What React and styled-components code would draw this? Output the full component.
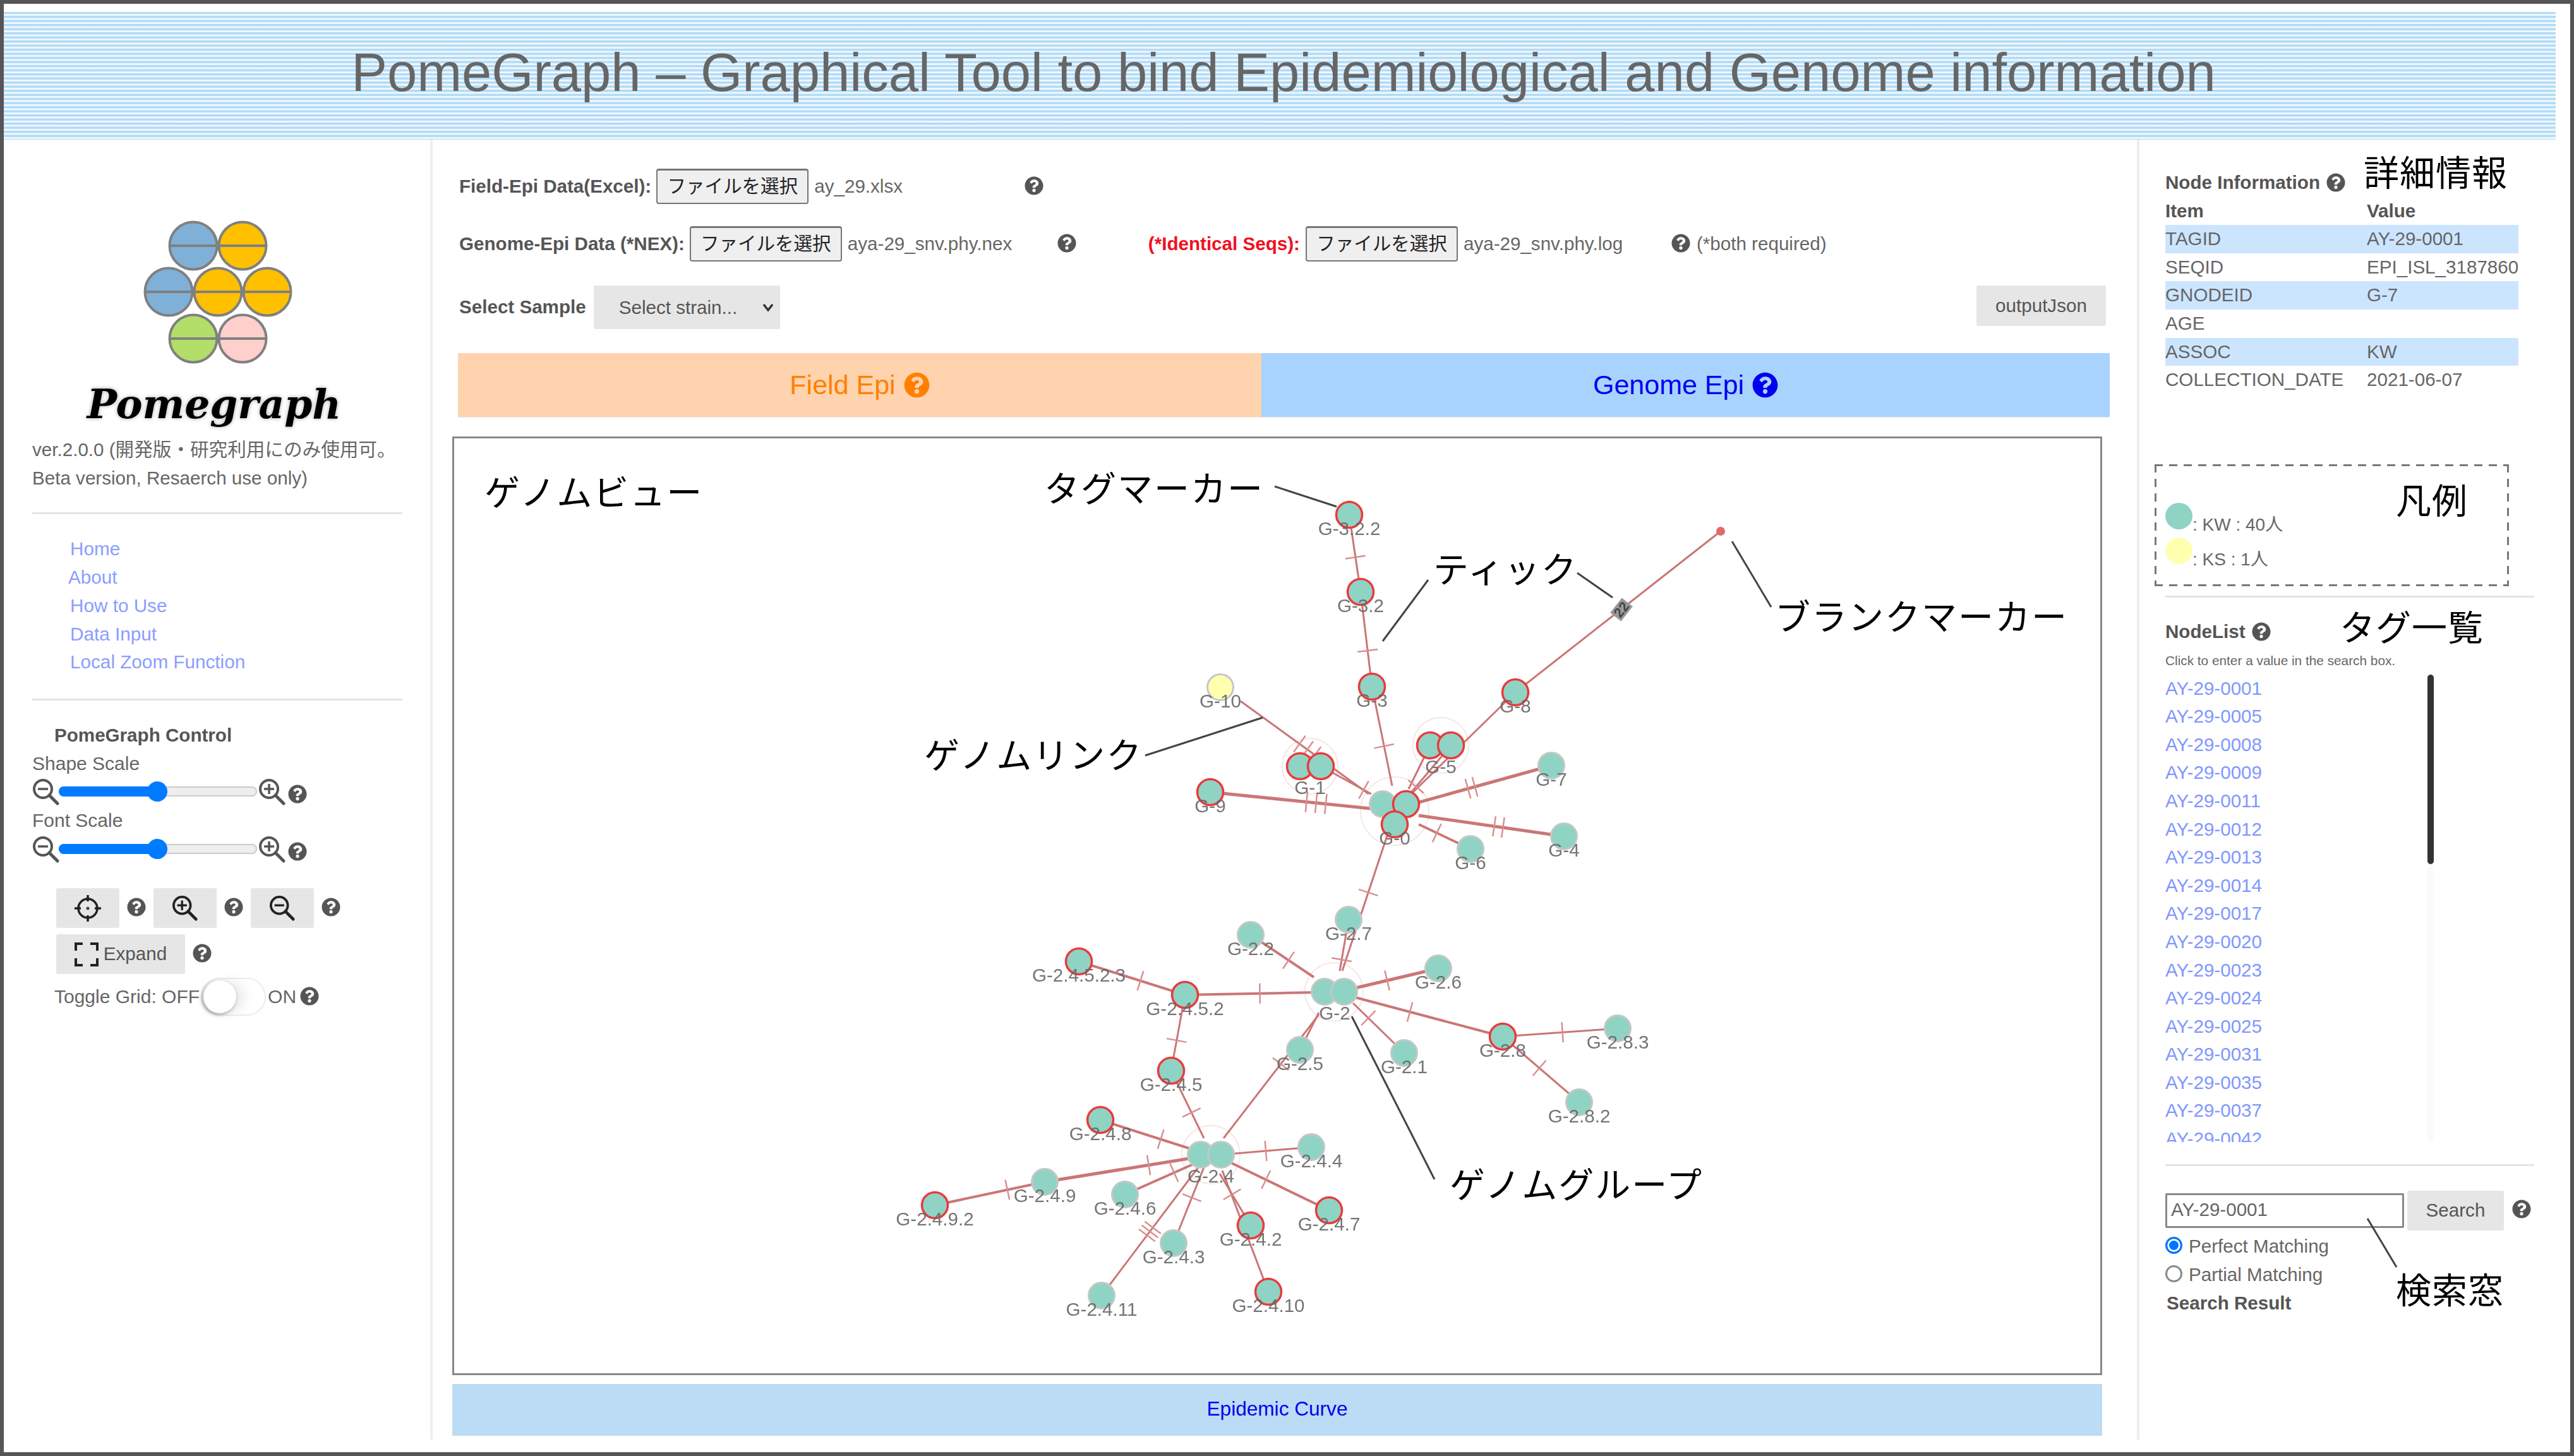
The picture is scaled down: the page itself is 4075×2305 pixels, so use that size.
import React from 'react';
import styled, { createGlobalStyle } from 'styled-components';
import { FaQuestionCircle } from 'react-icons/fa';

const SANS = `"Liberation Sans", "Noto Sans CJK JP", sans-serif`;

const Global = createGlobalStyle`
  html, body { margin: 0; padding: 0; background: #fff; }
  body { font-family: ${SANS}; font-size: 30px; color: #666; line-height: 44.7px; }
  * { box-sizing: border-box; }
`;

const Frame = styled.div`
  width: 4075px; height: 2305px; border: 6px solid #555; background: #fff;
  padding-top: 13px; overflow: hidden;
`;
const Header = styled.header`
  height: 202px; margin-right: 23px; padding: 0 0 12px 12px;
  display: flex; align-items: center; justify-content: center;
  background: repeating-linear-gradient(180deg, #aed9f6 0, #b8def7 2.6px, #eef7fd 3.6px, #f2f9fe 5.5px, #aed9f6 6.5px);
`;
const Title = styled.h1`
  margin: 0; font-size: 85px; font-weight: 400; color: #666; line-height: 1; white-space: nowrap;
`;
const Body = styled.div`
  display: flex; height: 2058px;
`;

/* ------- left sidebar ------- */
const Sidebar = styled.aside`
  width: 679px; flex: none; border-right: 4px solid #eceef4; padding: 127px 44px 0 45px;
`;
const LogoBox = styled.svg`
  display: block; width: 356px; height: 232px; margin-left: 116px;
`;
const Wordmark = styled.div`
  height: 110px; line-height: 120px; width: 480px; margin-left: 48px; text-align: center;
  font-family: "DejaVu Serif", serif; font-style: italic; font-weight: 700; font-size: 63px; color: #000;
  text-shadow: 0 0 6px rgba(0,0,0,.35);
`;
const Version = styled.div`
  font-size: 29.6px; white-space: nowrap;
`;
const Rule = styled.hr`
  border: 0; border-top: 3px solid #e4e4e4; margin: ${p => p.$top}px 0 ${p => p.$bottom}px;
`;
const Nav = styled.nav`
  padding-left: 60px; display: flex; flex-direction: column;
`;
const NavLink = styled.a`
  color: #8b9dff; font-size: 29.7px; margin-left: ${p => p.$shift || 0}px; white-space: nowrap;
`;
const ControlTitle = styled.div`
  font-weight: 700; color: #555; padding-left: 35px; font-size: 29.6px;
`;
const ScaleRow = styled.div`
  display: flex; align-items: center; height: 45px;
`;
const Track = styled.div`
  position: relative; width: 314px; height: 16px; margin: -2px 2px 0 -2px; border-radius: 8px;
  background: #eee; border: 2px solid #ccc;
`;
const TrackFill = styled.div`
  position: absolute; left: -2px; top: -2px; bottom: -2px; width: 155px; background: #007bff; border-radius: 8px 0 0 8px;
`;
const Thumb = styled.div`
  position: absolute; left: 138px; top: -10px; width: 32px; height: 32px; border-radius: 50%; background: #007bff;
`;
const HelpIcon = styled(FaQuestionCircle)`
  flex: none; display: block; color: ${p => p.$color || '#555'};
  width: ${p => p.$size || 30}px; height: ${p => p.$size || 30}px;
`;
const ToolRow = styled.div`
  display: flex; align-items: center; padding-left: 38px; height: 63px; margin-top: ${p => p.$top}px;
`;
const GreyButton = styled.div`
  flex: none; display: flex; align-items: center; justify-content: center; gap: 8px;
  width: ${p => p.$w}px; height: ${p => p.$h || 63}px; background: #e6e6e6; border-radius: 3px; color: #555;
  font-size: ${p => p.$fs || 29.6}px; white-space: nowrap;
`;
const ToolHelp = styled.span`
  display: block; margin: -4px 12px 0;
`;
const ToggleRow = styled.div`
  display: flex; align-items: center; padding-left: 35px; height: 60px; margin-top: 6px; white-space: nowrap;
`;
const Toggle = styled.div`
  flex: none; position: relative; width: 103px; height: 60px; border-radius: 30px; border: 2px solid #ececec; margin: 0 3px 0 2px;
`;
const Knob = styled.div`
  position: absolute; left: 2px; top: 2px; width: 52px; height: 52px; border-radius: 50%; background: #fff;
  box-shadow: -2px 2px 6px rgba(0,0,0,.4), 14px 0 18px rgba(0,0,0,.08);
`;

/* ------- centre ------- */
const Main = styled.main`
  width: 2698px; flex: none; padding: 46px 0 0 31px;
`;
const DataRow = styled.div`
  display: flex; align-items: center; padding-left: 11px; height: ${p => p.$h}px; margin-top: ${p => p.$top || 0}px; white-space: nowrap;
`;
const FieldLabel = styled.span`
  font-weight: 700; color: ${p => p.$red ? '#f01020' : '#555'}; margin: 0 ${p => p.$right || 8}px 0 ${p => p.$left || 0}px; font-size: 29.6px;
`;
const FileButton = styled.div`
  flex: none; width: 241px; height: 56px; border: 2px solid #767676; border-top-width: 3px; border-radius: 4px;
  background: #efefef; color: #222; display: flex; align-items: center; justify-content: center; font-size: 29.5px;
`;
const FileName = styled.span`
  flex: none; width: ${p => p.$w}px; padding-left: 9px; color: #666; font-size: 29.6px;
`;
const PlainHelp = styled.span`
  display: block; margin-top: -2px;
`;
const Note = styled.span`
  margin-left: 10px; font-size: 29.6px;
`;
const SelectBox = styled.div`
  flex: none; position: relative; width: 295px; height: 69px; margin-left: 12px; background: #e6e6e6; border-radius: 3px;
  padding-left: 40px; line-height: 69px; color: #555; font-size: 29.6px;
`;
const Chevron = styled.svg`
  position: absolute; right: 10px; top: 27px; width: 18px; height: 16px;
`;
const Spacer = styled.div`
  flex: 1;
`;
const OutputButton = styled(GreyButton)`
  margin: -5px 49px 0 0;
`;
const Tabs = styled.div`
  display: flex; height: 101px; margin: 38px 0 0 9px; width: 2615px;
`;
const Tab = styled.div`
  display: flex; align-items: center; justify-content: center; gap: 13px;
  width: ${p => p.$w}px; background: ${p => p.$bg}; color: ${p => p.$fg}; font-size: 43px;
  box-shadow: 0 1px 1px rgba(0,0,0,.08);
`;
const GraphBox = styled.div`
  position: relative; width: 2612px; height: 1486px; margin-top: 31px; border: 3px solid #888;
`;
const GraphSvg = styled.svg`
  display: block; width: 2606px; height: 1480px; font-family: ${SANS};
`;
const SoftLayer = styled.g`
  filter: blur(.7px);
`;
const CurveBar = styled.div`
  width: 2612px; height: 82px; margin-top: 14px; background: #bbdcf4; color: #0000f0; text-align: center;
  line-height: 78px; font-size: 31.6px;
`;

/* ------- right ------- */
const RightPanel = styled.aside`
  position: relative; flex: 1; border-left: 4px solid #eceef4; padding: 46px 0 0 41px; font-size: 29.6px;
`;
const PanelTitle = styled.div`
  display: flex; align-items: center; gap: 10px; font-weight: 700; color: #555;
`;
const InfoRow = styled.div`
  display: grid; grid-template-columns: 319px 1fr; width: 559px; height: 44.6px; white-space: nowrap;
  background: ${p => p.$on ? '#cce5ff' : 'transparent'}; font-weight: ${p => p.$head ? 700 : 400}; color: ${p => p.$head ? '#555' : '#666'};
`;
const DASH = 'linear-gradient(90deg, #777 13px, transparent 13px)';
const DASHV = 'linear-gradient(180deg, #777 13px, transparent 13px)';
const Legend = styled.div`
  width: 561px; height: 193px; margin: 111px 0 0 -17px; padding: 58px 0 0 17px;
  background:
    ${DASH} 0 0 / 23px 3px repeat-x,
    ${DASH} 0 100% / 23px 3px repeat-x,
    ${DASHV} 0 0 / 3px 23px repeat-y,
    ${DASHV} 100% 0 / 3px 23px repeat-y;
`;
const LegendRow = styled.div`
  display: flex; height: 55px; color: #666; font-size: 28px;
`;
const LegendDot = styled.span`
  flex: none; width: 43px; height: 42px; margin-top: 3px; border-radius: 50%; background: ${p => p.$c};
`;
const LegendText = styled.span`
  padding-top: 16px;
`;
const PanelRule = styled.hr`
  width: 584px; border: 0; border-top: 3px solid #e4e4e4; margin: ${p => p.$top}px 0 ${p => p.$bottom}px;
`;
const Hint = styled.div`
  font-size: 20.8px; height: 45px; line-height: 46px; color: #666; white-space: nowrap;
`;
const TagList = styled.div`
  position: relative; width: 425px; height: 740px; overflow: hidden; display: flex; flex-direction: column;
`;
const TagLink = styled.a`
  flex: none; height: 44.6px; color: #7f97ff; line-height: 44.6px;
`;
const ScrollTrack = styled.div`
  position: absolute; right: 0; top: 0; bottom: 0; width: 10px; background: #fafafa; border-radius: 5px;
`;
const ScrollThumb = styled.div`
  height: 300px; background: #333; border-radius: 5px;
`;
const SearchRow = styled.div`
  display: flex; align-items: center; height: 63px; margin-top: 39px;
`;
const SearchInput = styled.div`
  flex: none; width: 378px; height: 55px; border: 3px solid #888; border-radius: 2px; padding-left: 6px; line-height: 46px; color: #666;
`;
const SearchButton = styled(GreyButton)`
  margin: 0 13px 0 5px;
`;
const RadioRow = styled.div`
  display: flex; align-items: center; gap: 10px; height: 45px;
`;
const Radio = styled.span`
  flex: none; width: 27px; height: 27px; border-radius: 50%; margin-top: -4px;
  border: ${p => p.$on ? '3px solid #0075ff' : '3px solid #8a8a8a'};
  box-shadow: ${p => p.$on ? 'inset 0 0 0 3px #fff' : 'none'};
  background: ${p => p.$on ? '#0075ff' : '#fff'};
`;
const ResultTitle = styled.div`
  font-weight: 700; color: #555; padding-left: 2px;
`;
const Callout = styled.div`
  position: absolute; left: ${p => p.$x}px; top: ${p => p.$y}px; font-size: 56px; line-height: 64px; color: #000; white-space: nowrap; letter-spacing: 1px;
`;
const CalloutLine = styled.svg`
  position: absolute; left: 350px; top: 1700px; width: 70px; height: 90px;
`;

/* ------- drawings ------- */
const Magnifier = ({ kind, size = 44, stroke = '#555' }) => (
  <svg width={size} height={size} viewBox="0 0 44 44" style={{ flex: 'none', display: 'block' }}>
    <circle cx="17" cy="17" r="14" fill="none" stroke={stroke} strokeWidth="4" />
    <line x1="27" y1="27" x2="40" y2="40" stroke={stroke} strokeWidth="5" strokeLinecap="round" />
    <line x1="9" y1="17" x2="25" y2="17" stroke={stroke} strokeWidth="3.5" />
    {kind === 'plus' && <line x1="17" y1="9" x2="17" y2="25" stroke={stroke} strokeWidth="3.5" />}
  </svg>
);
const Crosshair = () => (
  <svg width="42" height="42" viewBox="0 0 42 42" style={{ display: 'block' }}>
    <circle cx="21" cy="21" r="15" fill="none" stroke="#222" strokeWidth="3.5" />
    <path d="M21 0v10M21 32v10M0 21h10M32 21h10" stroke="#222" strokeWidth="3.5" />
    <circle cx="21" cy="21" r="2.5" fill="#444" />
  </svg>
);
const ExpandIcon = () => (
  <svg width="38" height="38" viewBox="0 0 38 38" style={{ display: 'block' }}>
    <path d="M2 13V2h11M25 2h11v11M36 25v11H25M13 36H2V25" fill="none" stroke="#222" strokeWidth="4" />
  </svg>
);

const LOGO = [
  [139, 41, '#7fb0d8'], [217, 41, '#ffc000'],
  [100, 114, '#7fb0d8'], [178, 114, '#ffc000'], [256, 114, '#ffc000'],
  [139, 188, '#b3de69'], [217, 188, '#ffcfcc'],
];

const EDGES = [
  [2136,816,2154,938,3,[.55]], [2154,938,2172,1088,3,[.62]], [2172,1088,2204,1245,3,[.6]],
  [2399,1097,2724,842,3,[]], [2399,1097,2230,1262,3,[]], [2264,1181,2230,1250,3,[]], [2297,1181,2232,1258,3,[.85]],
  [1964,1111,2167,1258,3,[.46,.52,.58]], [2091,1214,2171,1258,3,[.85]],
  [1916,1255,2170,1281,5,[.6,.66,.72]], [2456,1213,2236,1274,5,[.55,.6]], [2476,1325,2246,1292,5,[.42,.48]], [2328,1345,2246,1306,4,[.65]],
  [2196,1324,2125,1538,3,[.42]], [2135,1457,2121,1538,3,[.78]],
  [2058,1663,2088,1604,3,[]], [2088,1607,1937,1803,3,[.4]], [2223,1668,2142,1589,3,[.7]],
  [2379,1642,2142,1579,4,[.62]], [2277,1534,2142,1566,5,[.6]], [1980,1481,2080,1548,4,[.6]],
  [1876,1576,2084,1572,4,[.57]], [1708,1523,1876,1576,4,[.58]], [1876,1576,1854,1696,3,[.6]], [1854,1696,1906,1803,3,[.62]],
  [2379,1642,2561,1629,3,[.52]], [2379,1642,2500,1746,3,[.48]],
  [1742,1774,1889,1821,4,[.65]], [2076,1817,1945,1828,3,[.55]], [1654,1872,1889,1834,5,[.7]], [1480,1909,1654,1872,4,[.66]],
  [1781,1892,1889,1844,4,[.72]], [1858,1969,1906,1849,3,[.6]], [1744,2052,1897,1849,3,[.47,.5,.53]],
  [1980,1941,1931,1859,3,[.6]], [2008,2046,1935,1854,3,[]], [2104,1917,1943,1839,4,[.62]],
];

const HALOS = [[2281,1181,44],[2074,1214,44],[2208,1285,54],[2112,1571,46],[1917,1829,46]];

const NODES = [
  ['G-3.2.2',2136,816,1],['G-3.2',2154,938,1],['G-3',2172,1088,1],['G-8',2399,1097,1],['G-10',1932,1089,0,'#ffffb0'],
  ['',2264,1181,1],['G-5',2297,1181,1,null,2281],['',2058,1214,1],['G-1',2091,1214,1,null,2074],['G-9',1916,1255,1],
  ['',2189,1274,0],['',2226,1274,1],['G-0',2208,1306,1],['G-7',2456,1213,0],['G-4',2476,1325,0],['G-6',2328,1345,0],
  ['G-2.7',2135,1457,0],['G-2.2',1980,1481,0],['G-2.6',2277,1534,0],['G-2.4.5.2.3',1708,1523,1],['G-2.4.5.2',1876,1576,1],
  ['',2097,1571,0],['G-2',2128,1571,0,null,2113],['G-2.5',2058,1663,0],['G-2.1',2223,1668,0],['G-2.8',2379,1642,1],
  ['G-2.8.3',2561,1629,0],['G-2.8.2',2500,1746,0],['G-2.4.5',1854,1696,1],['G-2.4.8',1742,1774,1],
  ['',1901,1829,0],['G-2.4',1933,1829,0,null,1917],['G-2.4.4',2076,1817,0],['G-2.4.9',1654,1872,0],['G-2.4.9.2',1480,1909,1],
  ['G-2.4.6',1781,1892,0],['G-2.4.3',1858,1969,0],['G-2.4.2',1980,1941,1],['G-2.4.7',2104,1917,1],['G-2.4.11',1744,2052,0],['G-2.4.10',2008,2046,1],
];

const CALLOUTS = [
  ['ゲノムビュー',767,781],['タグマーカー',1653,775],['ティック',2269,903],['ブランクマーカー',2810,978],['ゲノムリンク',1463,1197],['ゲノムグループ',2295,1877],
];
const LEADERS = [
  [2018,771,2116,803],[2261,919,2189,1016],[2497,908,2553,947],[2742,858,2804,962],[1813,1197,1999,1137],[2140,1610,2271,1868],
];

const ticksFor = ([x1, y1, x2, y2, , ts]) => ts.map(t => {
  const x = x1 + (x2 - x1) * t, y = y1 + (y2 - y1) * t;
  const l = Math.hypot(x2 - x1, y2 - y1), nx = -(y2 - y1) / l, ny = (x2 - x1) / l;
  return [x - nx * 16, y - ny * 16, x + nx * 16, y + ny * 16];
});

const Graph = () => (
  <GraphSvg viewBox="719 695 2606 1480">
    <SoftLayer>
      {HALOS.map(([x, y, r], i) => <circle key={i} cx={x} cy={y} r={r} fill="#fff" stroke="#f7e6e6" strokeWidth="2" />)}
      {EDGES.map((e, i) => <line key={i} x1={e[0]} y1={e[1]} x2={e[2]} y2={e[3]} stroke="#cb7676" strokeWidth={e[4]} />)}
      {EDGES.flatMap((e, i) => ticksFor(e).map((t, j) => (
        <line key={`${i}-${j}`} x1={t[0]} y1={t[1]} x2={t[2]} y2={t[3]} stroke="#d98f8f" strokeWidth="2.5" />
      )))}
      <circle cx="2724" cy="842" r="7" fill="#e06a6a" />
      <g transform="rotate(-52 2567 966)">
        <rect x="2552" y="955" width="30" height="22" fill="#999" />
        <text x="2567" y="966" fontSize="22" fontWeight="700" fill="#444" textAnchor="middle" dominantBaseline="central">22</text>
      </g>
      {NODES.map(([, x, y, tag, fill], i) => (
        <circle key={i} cx={x} cy={y} r="20.5" fill={fill || '#8fd3c5'} stroke={tag ? '#ea3a3a' : '#c2c8c4'} strokeWidth={tag ? 3.5 : 3} />
      ))}
      {NODES.filter(n => n[0]).map(([label, x, y, , , lx]) => (
        <text key={label} x={lx || x} y={y + (lx ? 33 : 21)} fontSize="29.6" fill="#666" fillOpacity=".9" textAnchor="middle" dominantBaseline="central">{label}</text>
      ))}
    </SoftLayer>
    {LEADERS.map((l, i) => <line key={i} x1={l[0]} y1={l[1]} x2={l[2]} y2={l[3]} stroke="#444" strokeWidth="3" />)}
    {CALLOUTS.map(([t, x, y]) => (
      <text key={t} x={x} y={y} fontSize="56" letterSpacing="2" fill="#000" dominantBaseline="central">{t}</text>
    ))}
  </GraphSvg>
);

const INFO = [
  ['TAGID', 'AY-29-0001'], ['SEQID', 'EPI_ISL_3187860'], ['GNODEID', 'G-7'], ['AGE', ''], ['ASSOC', 'KW'], ['COLLECTION_DATE', '2021-06-07'],
];
const TAGS = ['0001','0005','0008','0009','0011','0012','0013','0014','0017','0020','0023','0024','0025','0031','0035','0037','0042'];

export default function App() {
  return (
    <>
      <Global />
      <Frame>
        <Header>
          <Title>PomeGraph – Graphical Tool to bind Epidemiological and Genome information</Title>
        </Header>
        <Body>
          <Sidebar>
            <LogoBox viewBox="0 0 356 232">
              {LOGO.map(([x, y, c], i) => (
                <g key={i}>
                  <circle cx={x} cy={y} r="37.5" fill={c} stroke="#808080" strokeWidth="4" />
                  <line x1={x - 37} y1={y} x2={x + 37} y2={y} stroke="#808080" strokeWidth="4" />
                </g>
              ))}
            </LogoBox>
            <Wordmark>Pomegraph</Wordmark>
            <Version>ver.2.0.0 (開発版・研究利用にのみ使用可。<br />Beta version, Resaerch use only)</Version>
            <Rule $top={32} $bottom={33} />
            <Nav>
              <NavLink>Home</NavLink>
              <NavLink $shift={-3}>About</NavLink>
              <NavLink>How to Use</NavLink>
              <NavLink>Data Input</NavLink>
              <NavLink>Local Zoom Function</NavLink>
            </Nav>
            <Rule $top={35} $bottom={33} />
            <ControlTitle>PomeGraph Control</ControlTitle>
            <div>Shape Scale</div>
            <ScaleRow>
              <Magnifier kind="minus" />
              <Track><TrackFill /><Thumb /></Track>
              <Magnifier kind="plus" />
              <HelpIcon $size={30} style={{ marginLeft: 3, marginTop: 6 }} />
            </ScaleRow>
            <div style={{ marginTop: 1 }}>Font Scale</div>
            <ScaleRow>
              <Magnifier kind="minus" />
              <Track><TrackFill /><Thumb /></Track>
              <Magnifier kind="plus" />
              <HelpIcon $size={30} style={{ marginLeft: 3, marginTop: 6 }} />
            </ScaleRow>
            <ToolRow $top={39}>
              <GreyButton $w={100}><Crosshair /></GreyButton>
              <ToolHelp><HelpIcon /></ToolHelp>
              <GreyButton $w={100}><Magnifier kind="plus" size={42} stroke="#222" /></GreyButton>
              <ToolHelp><HelpIcon /></ToolHelp>
              <GreyButton $w={100}><Magnifier kind="minus" size={42} stroke="#222" /></GreyButton>
              <ToolHelp><HelpIcon /></ToolHelp>
            </ToolRow>
            <ToolRow $top={10}>
              <GreyButton $w={204}><ExpandIcon /><span>Expand</span></GreyButton>
              <ToolHelp><HelpIcon /></ToolHelp>
            </ToolRow>
            <ToggleRow>
              <span>Toggle Grid: OFF</span>
              <Toggle><Knob /></Toggle>
              <span>ON</span>
              <HelpIcon style={{ marginLeft: 6, marginTop: -2 }} />
            </ToggleRow>
          </Sidebar>

          <Main>
            <DataRow $h={56}>
              <FieldLabel>Field-Epi Data(Excel):</FieldLabel>
              <FileButton>ファイルを選択</FileButton>
              <FileName $w={342}>ay_29.xlsx</FileName>
              <PlainHelp><HelpIcon /></PlainHelp>
            </DataRow>
            <DataRow $h={56} $top={35}>
              <FieldLabel>Genome-Epi Data (*NEX):</FieldLabel>
              <FileButton>ファイルを選択</FileButton>
              <FileName $w={341}>aya-29_snv.phy.nex</FileName>
              <PlainHelp><HelpIcon /></PlainHelp>
              <FieldLabel $red $left={114} $right={9}>(*Identical Seqs):</FieldLabel>
              <FileButton>ファイルを選択</FileButton>
              <FileName $w={338}>aya-29_snv.phy.log</FileName>
              <PlainHelp><HelpIcon /></PlainHelp>
              <Note>(*both required)</Note>
            </DataRow>
            <DataRow $h={69} $top={38}>
              <FieldLabel style={{ margin: 0 }}>Select Sample</FieldLabel>
              <SelectBox>
                Select strain...
                <Chevron viewBox="0 0 18 16"><path d="M2 3l7 9 7-9" fill="none" stroke="#333" strokeWidth="3.5" /></Chevron>
              </SelectBox>
              <Spacer />
              <OutputButton $w={205} $h={64}>outputJson</OutputButton>
            </DataRow>
            <Tabs>
              <Tab $w={1272} $bg="#ffd3ad" $fg="#ff8000">Field Epi<HelpIcon $size={41} $color="#ff8000" /></Tab>
              <Tab $w={1343} $bg="#a9d3ff" $fg="#0000f0">Genome Epi<HelpIcon $size={41} $color="#0000f0" /></Tab>
            </Tabs>
            <GraphBox><Graph /></GraphBox>
            <CurveBar>Epidemic Curve</CurveBar>
          </Main>

          <RightPanel>
            <PanelTitle>Node Information <HelpIcon /></PanelTitle>
            <InfoRow $head><span>Item</span><span>Value</span></InfoRow>
            {INFO.map(([k, v], i) => (
              <InfoRow key={k} $on={i % 2 === 0}><span>{k}</span><span>{v}</span></InfoRow>
            ))}
            <Legend>
              <LegendRow><LegendDot $c="#8fd3c5" /><LegendText>: KW : 40人</LegendText></LegendRow>
              <LegendRow><LegendDot $c="#ffffb0" /><LegendText>: KS : 1人</LegendText></LegendRow>
            </Legend>
            <PanelRule $top={15} $bottom={32} />
            <PanelTitle>NodeList <HelpIcon /></PanelTitle>
            <Hint>Click to enter a value in the search box.</Hint>
            <TagList>
              {TAGS.map(t => <TagLink key={t}>AY-29-{t}</TagLink>)}
              <ScrollTrack><ScrollThumb /></ScrollTrack>
            </TagList>
            <PanelRule $top={35} $bottom={0} />
            <SearchRow>
              <SearchInput>AY-29-0001</SearchInput>
              <SearchButton $w={153}>Search</SearchButton>
              <HelpIcon style={{ marginTop: -4 }} />
            </SearchRow>
            <RadioRow style={{ marginTop: 3 }}><Radio $on />Perfect Matching</RadioRow>
            <RadioRow><Radio />Partial Matching</RadioRow>
            <ResultTitle>Search Result</ResultTitle>
            <Callout $x={355} $y={22}>詳細情報</Callout>
            <Callout $x={406} $y={541}>凡例</Callout>
            <Callout $x={317} $y={742}>タグ一覧</Callout>
            <Callout $x={406} $y={1791}>検索窓</Callout>
            <CalloutLine viewBox="0 0 70 90"><line x1="11" y1="8" x2="57" y2="85" stroke="#444" strokeWidth="3" /></CalloutLine>
          </RightPanel>
        </Body>
      </Frame>
    </>
  );
}
